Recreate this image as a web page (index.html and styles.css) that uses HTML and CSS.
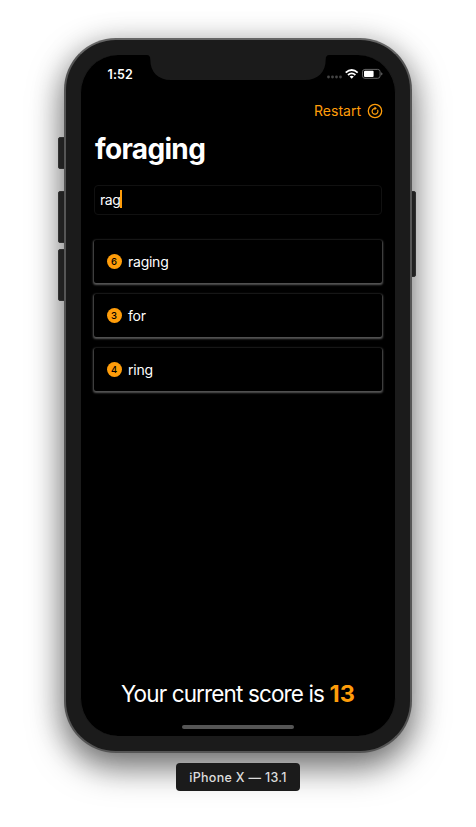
FILE: index.html
```html
<!DOCTYPE html>
<html lang="en">
<head>
<meta charset="utf-8">
<title>WordScramble</title>
<link rel="stylesheet" href="styles.css">
</head>
<body>
<main class="stage">
  <div class="phone">
    <span class="key key-mute"></span>
    <span class="key key-up"></span>
    <span class="key key-down"></span>
    <span class="key key-power"></span>
    <div class="screen">
      <svg class="notch" width="182" height="25" viewBox="0 0 182 25"><path fill="#1b1b1b" d="M0 0H182Q178.700 0 178.700 4.500C178.700 17 171 25 158 25H24C11 25 3.300 17 3.300 4.500Q3.300 0 0 0Z"/></svg>
      <header class="status">
        <span class="time">1:52</span>
        <svg class="indicators" width="58" height="14" viewBox="0 0 58 14">
          <g fill="#454545"><circle cx="2.500" cy="10" r="1.400"/><circle cx="6.500" cy="10" r="1.400"/><circle cx="10.500" cy="10" r="1.400"/><circle cx="14.500" cy="10" r="1.400"/></g>
          <g fill="none" stroke="#fff" stroke-width="1.800"><path d="M19.700 5.700Q25.700.3 31.700 5.700"/><path d="M22 8Q25.700 4.700 29.400 8"/></g>
          <path fill="#fff" d="M23.600 9.600Q25.700 8 27.800 9.600L25.700 11.800Z"/>
          <rect x="36.500" y="2.400" width="17.600" height="8.900" rx="2.400" fill="none" stroke="#666"/>
          <rect x="38" y="3.800" width="9.600" height="6.100" rx="1" fill="#fff"/>
          <path fill="#666" d="M55.200 5.300Q56.500 5.800 56.500 6.800T55.200 8.400Z"/>
        </svg>
      </header>
      <nav class="toolbar">
        <span class="restart">Restart</span>
        <svg width="16" height="16" viewBox="0 0 16 16" fill="none" stroke="#ff9d0a"><circle cx="8" cy="8" r="6.700" stroke-width="1.300"/><path stroke-width="1.200" stroke-linecap="round" d="M10.700 7.200A2.900 2.900 0 1 1 7.800 5.400"/><path fill="#ff9d0a" stroke="none" d="M7.500 3.500L9.900 5.300L7.500 7.200Z"/></svg>
      </nav>
      <h1 class="title">foraging</h1>
      <div class="field"><span class="entry">rag</span><span class="caret"></span></div>
      <ul class="words">
        <li class="word"><span class="badge">6</span><span class="label">raging</span></li>
        <li class="word"><span class="badge">3</span><span class="label">for</span></li>
        <li class="word"><span class="badge">4</span><span class="label">ring</span></li>
      </ul>
      <p class="score"><span class="phrase">Your current score is</span> <b>13</b></p>
      <div class="home"></div>
    </div>
  </div>
  <div class="device">iPhone X — 13.1</div>
</main>
</body>
</html>
```
FILE: styles.css
```css
* { box-sizing: border-box; }
body {
  margin: 0;
  background: #fff;
  font-family: Inter, "Liberation Sans", sans-serif;
  overflow: hidden;
}
.stage {
  height: 827px;
  padding-top: 38px;
  display: flex;
  flex-direction: column;
  align-items: center;
}
.phone {
  position: relative;
  width: 348px;
  height: 715px;
  padding: 15px 14px;
  border: 2px solid #555;
  border-top-color: #666;
  border-radius: 52px;
  background: #1b1b1b;
  box-shadow: 0 14px 34px rgba(0, 0, 0, .52), 0 5px 32px rgba(0, 0, 0, .18);
}
.key {
  position: absolute;
  z-index: -1;
  left: -8px;
  width: 10px;
  border-radius: 2px;
  background: #303030;
  border: 1px solid #444;
}
.key-mute { top: 97px; height: 32px; }
.key-up { top: 151px; height: 52px; }
.key-down { top: 209px; height: 52px; }
.key-power { top: 151px; height: 86px; left: auto; right: -6px; }
.screen {
  position: relative;
  width: 316px;
  height: 681px;
  padding: 0 14px;
  background: #000;
  border-radius: 38px;
  display: flex;
  flex-direction: column;
  color: #fff;
  border-left: 1px solid #1b1b1b;
  border-right: 1px solid #1b1b1b;
}
.notch { position: absolute; left: 66px; top: 0; }
.status {
  height: 38px;
  padding: 0 0 0 12.5px;
  margin-right: -3px;
  display: flex;
  align-items: center;
  justify-content: space-between;
}
.time { font-size: 12.5px; font-weight: 600; letter-spacing: .1px; }
.toolbar {
  height: 36px;
  display: flex;
  align-items: center;
  justify-content: flex-end;
  gap: 6px;
  margin-right: -2px;
  color: #ff9d0a;
}
.toolbar svg { margin-bottom: 1px; }
.restart { margin-bottom: 2px; font-size: 14px; }
.title {
  margin: 0;
  height: 42px;
  font-size: 28px;
  line-height: 41px;
  letter-spacing: -.65px;
  font-weight: 700;
}
.field {
  height: 30px;
  margin: 14px -1px 0 -1px;
  padding: 0 0 2px 5px;
  border: 1px solid #111;
  border-radius: 4px;
  display: flex;
  align-items: center;
  font-size: 14px;
}
.entry { letter-spacing: -.5px; }
.caret { width: 2px; height: 18px; background: #ff9d0a; }
.words {
  list-style: none;
  margin: 25px -1px 0 -1px;
  padding: 0;
  display: flex;
  flex-direction: column;
  gap: 11px;
}
.word {
  height: 43px;
  padding-left: 12.5px;
  display: flex;
  align-items: center;
  gap: 6.5px;
  background: #000;
  border-radius: 2px;
  box-shadow: 0 1px 2px 1px #555;
  font-size: 14px;
}
.label { letter-spacing: -.25px; }
.badge {
  width: 15px;
  height: 15px;
  border-radius: 50%;
  background: #ff9d0a;
  color: #000;
  font-size: 9.5px;
  font-weight: 500;
  line-height: 15px;
  text-align: center;
}
.score {
  margin: auto 0 0;
  height: 32px;
  font-size: 22.5px;
  line-height: 33px;
  text-align: center;
  white-space: nowrap;
}
.phrase { letter-spacing: -.87px; }
.score b { color: #ff9d0a; font-size: 23.5px; letter-spacing: .2px; margin-left: -1px; }
.home {
  width: 112px;
  height: 4px;
  margin: 16px auto 7px;
  border-radius: 2px;
  background: #555;
}
.device {
  width: 124px;
  height: 28px;
  margin-top: 10px;
  position: relative;
  border-radius: 4px;
  background: #1b1b1b;
  color: #ddd;
  font-size: 12.5px;
  letter-spacing: .3px;
  font-weight: 500;
  line-height: 29px;
  text-align: center;
  white-space: nowrap;
}
```
